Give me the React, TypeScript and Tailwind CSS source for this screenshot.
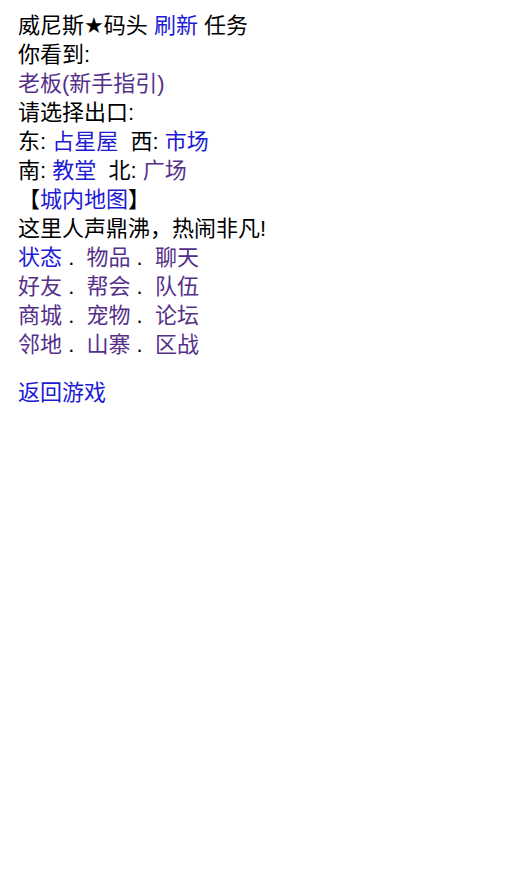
const blue = "text-[#1d1ad6]";
const purple = "text-[#55308a]";

function L({ v, children }: { v?: boolean; children: React.ReactNode }) {
  return <a href="#" className={v ? purple : blue}>{children}</a>;
}

export default function App() {
  return (
    <div className="min-h-[876px] bg-white px-[18px] pt-[11px] text-[22px] leading-[29px] text-black [font-family:'Liberation_Sans','Noto_Sans_CJK_SC',sans-serif]">
      <div>
        威尼斯<span className="[font-family:'DejaVu_Sans',sans-serif]">★</span>码头 <L>刷新</L> 任务
      </div>
      <div>你看到:</div>
      <div>
        <L v>老板(新手指引)</L>
      </div>
      <div>请选择出口:</div>
      <div>
        东: <L>占星屋</L>&nbsp; 西: <L>市场</L>
      </div>
      <div>
        南: <L>教堂</L>&nbsp; 北: <L v>广场</L>
      </div>
      <div>
        【<L>城内地图</L>】
      </div>
      <div>这里人声鼎沸，热闹非凡!</div>
      <div>
        <L>状态</L> .&nbsp; <L v>物品</L> .&nbsp; <L v>聊天</L>
      </div>
      <div>
        <L v>好友</L> .&nbsp; <L v>帮会</L> .&nbsp; <L v>队伍</L>
      </div>
      <div>
        <L v>商城</L> .&nbsp; <L v>宠物</L> .&nbsp; <L v>论坛</L>
      </div>
      <div>
        <L v>邻地</L> .&nbsp; <L v>山寨</L> .&nbsp; <L v>区战</L>
      </div>
      <div className="mt-[19px]">
        <L>返回游戏</L>
      </div>
    </div>
  );
}
